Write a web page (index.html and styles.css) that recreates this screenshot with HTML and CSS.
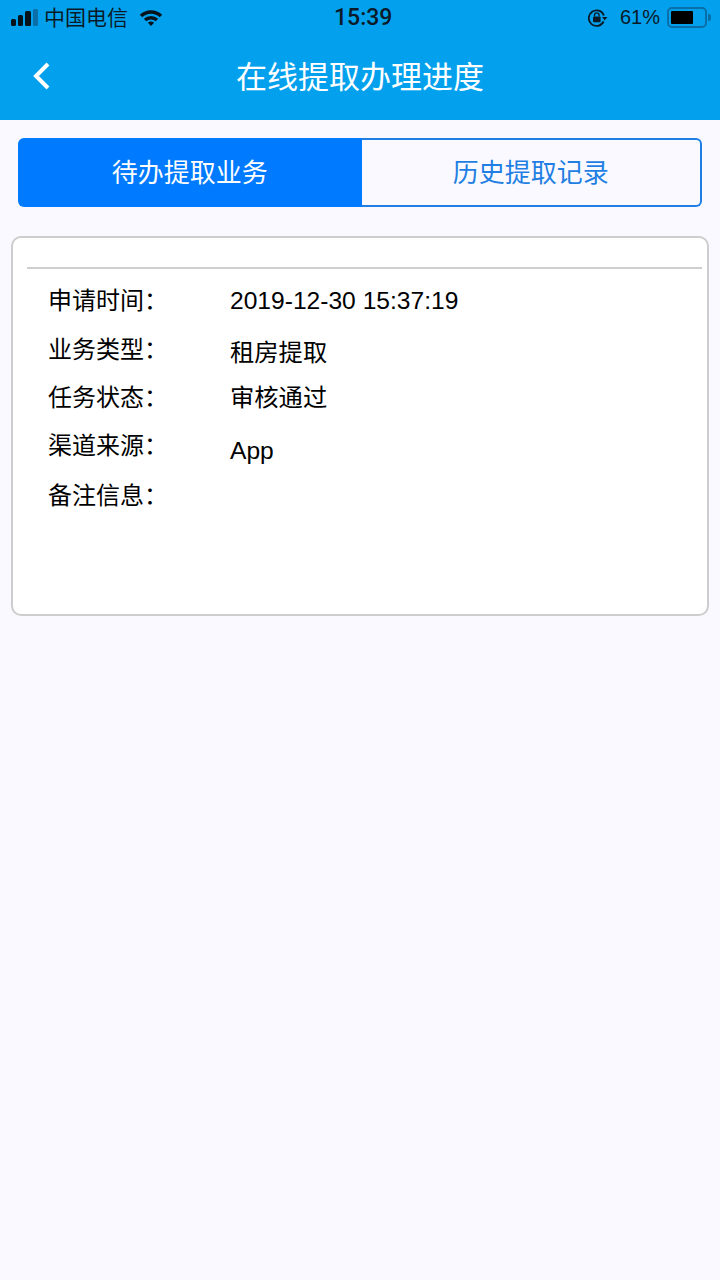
FILE: index.html
```html
<!DOCTYPE html>
<html lang="zh-CN">
<head>
    <meta charset="UTF-8">
    <meta name="viewport" content="width=device-width, initial-scale=1.0">
    <title>在线提取办理进度</title>
    <link rel="stylesheet" href="styles.css">
</head>
<body>

    <div class="header">
        <div class="status-bar">
            <div class="status-left">
                <svg class="signal" width="28" height="17" viewBox="0 0 28 17">
                    <rect x="1" y="10" width="5" height="7" rx="1.5" fill="#06121c"/>
                    <rect x="8" y="6" width="5" height="11" rx="1.5" fill="#06121c"/>
                    <rect x="15" y="2" width="6" height="15" rx="1.5" fill="#06121c"/>
                    <rect x="23" y="0" width="5" height="17" rx="1.5" fill="#0a6fa8"/>
                </svg>
                <span class="carrier">中国电信</span>
                <svg class="wifi" width="24" height="17" viewBox="0 0 26 19">
                    <path d="M0.5 6.5 A18 18 0 0 1 25.5 6.5 L22.8 9.3 A14 14 0 0 0 3.2 9.3 Z" fill="#06121c"/>
                    <path d="M5 11 A12 12 0 0 1 21 11 L18.3 13.8 A8 8 0 0 0 7.7 13.8 Z" fill="#06121c"/>
                    <path d="M9.5 15.5 A5.5 5.5 0 0 1 16.5 15.5 L13 19 Z" fill="#06121c"/>
                </svg>
            </div>
            <span class="clock">15:39</span>
            <div class="status-right">
                <svg class="rotation" width="20" height="18" viewBox="0 0 20 18">
                    <path d="M15.6 12.5 A7.8 7.8 0 1 1 15.9 6.5" fill="none" stroke="#0a1a28" stroke-width="1.8"/>
                    <path d="M14 8 L19.5 8 L16.7 11.5 Z" fill="#0a1a28"/>
                    <rect x="5" y="7.5" width="7.6" height="5.8" rx="1" fill="#0a1a28"/>
                    <path d="M6.5 7.5 V6.2 A2.3 2.3 0 0 1 11.1 6.2 V7.5" fill="none" stroke="#0a1a28" stroke-width="1.3"/>
                </svg>
                <span class="percent">61%</span>
                <div class="battery">
                    <div class="battery-level"></div>
                </div>
                <div class="battery-tip"></div>
            </div>
        </div>
        <div class="nav-bar">
            <svg class="back" width="20" height="30" viewBox="0 0 20 30">
                <path d="M16 3 L4 15 L16 27" fill="none" stroke="#fff" stroke-width="4"/>
            </svg>
            <h1>在线提取办理进度</h1>
        </div>
    </div>

    <div class="tabs">
        <div class="tab active">待办提取业务</div>
        <div class="tab">历史提取记录</div>
    </div>

    <div class="card">
        <div class="divider"></div>
        <div class="row"><span class="label">申请时间：</span><span class="value latin">2019-12-30 15:37:19</span></div>
        <div class="row row-second"><span class="label">业务类型：</span><span class="value drop-3">租房提取</span></div>
        <div class="row"><span class="label">任务状态：</span><span class="value">审核通过</span></div>
        <div class="row"><span class="label">渠道来源：</span><span class="value latin drop-5">App</span></div>
        <div class="row row-last"><span class="label">备注信息：</span><span class="value"></span></div>
    </div>

</body>
</html>
```

FILE: styles.css
```css
body {
    font-family: "Liberation Sans", "Noto Sans CJK SC", sans-serif;
    margin: 0;
    padding: 0;
    background-color: #faf9ff;
    color: #000;
    height: 1280px;
    overflow: hidden;
}
.header {
    background-color: #03a1ed;
    height: 120px;
}
.status-bar {
    height: 40px;
    display: flex;
    align-items: center;
    justify-content: space-between;
    padding: 0 9px 5px 10px;
    box-sizing: border-box;
    position: relative;
    color: #0a1a28;
}
.status-left,
.status-right {
    display: flex;
    align-items: center;
}
.signal {
    margin-right: 6px;
}
.carrier {
    font-size: 21px;
    line-height: 24px;
}
.wifi {
    margin-left: 11px;
}
.clock {
    position: absolute;
    left: 334px;
    top: 4px;
    font-family: Roboto, sans-serif;
    font-weight: 500;
    font-size: 23px;
    line-height: 28px;
}
.rotation {
    margin-right: 12px;
}
.percent {
    font-size: 20px;
    margin-right: 7px;
}
.battery {
    width: 32px;
    height: 13px;
    border: 2px solid #0a6fa8;
    border-radius: 5px;
    padding: 2px;
}
.battery-level {
    width: 68%;
    height: 100%;
    background-color: #000;
    border-radius: 1px;
}
.battery-tip {
    width: 3px;
    height: 7px;
    background-color: #0a6fa8;
    border-radius: 0 2px 2px 0;
    margin-left: 1px;
}
.nav-bar {
    height: 80px;
    display: flex;
    align-items: center;
    justify-content: center;
    position: relative;
    padding-bottom: 4px;
    box-sizing: border-box;
}
.back {
    position: absolute;
    left: 32px;
    top: 21px;
}
.nav-bar h1 {
    margin: 0;
    font-size: 31px;
    line-height: 40px;
    font-weight: normal;
    color: #fff;
}
.tabs {
    display: flex;
    margin: 18px 18px 0;
    height: 69px;
}
.tab {
    flex: 1;
    display: flex;
    align-items: center;
    justify-content: center;
    font-size: 26px;
    line-height: 34px;
    padding-top: 1px;
    box-sizing: border-box;
    color: #1f7fe3;
    border: 2px solid #1f7fe3;
    border-left: none;
    border-radius: 0 6px 6px 0;
}
.tab.active {
    flex: 0 0 343.5px;
    background-color: #007aff;
    border: none;
    border-radius: 6px 0 0 6px;
    color: #fff;
}
.card {
    margin: 29px 11px 0;
    height: 380px;
    border: 2px solid #cdcdcd;
    border-radius: 10px;
    background-color: #fff;
    box-sizing: border-box;
    padding: 29px 5px 0 14px;
}
.divider {
    height: 2px;
    background-color: #cfcfcf;
}
.row {
    display: flex;
    height: 32px;
    margin-top: 16px;
    padding-left: 21px;
    font-size: 24px;
    line-height: 32px;
}
.label {
    width: 182px;
    flex-shrink: 0;
}
.value {
    font-size: 24.3px;
}
.latin {
    font-size: 24.6px;
}
.row-second {
    margin-top: 17px;
}
.row-last {
    margin-top: 18px;
}
.drop-3 {
    margin-top: 3px;
}
.drop-5 {
    margin-top: 5px;
}
```
